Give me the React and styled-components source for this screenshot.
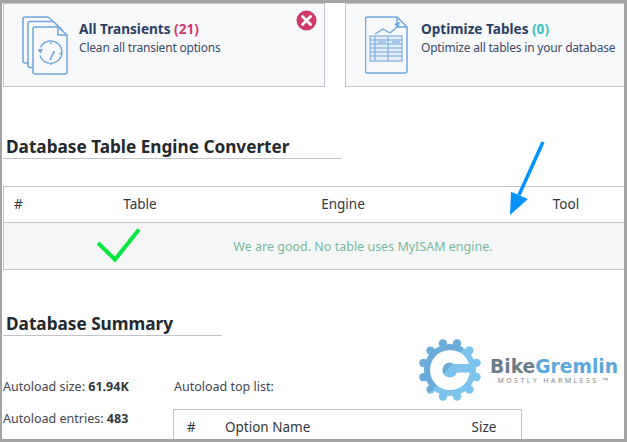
import styled, { createGlobalStyle } from 'styled-components';

const GlobalStyle = createGlobalStyle`
  html, body {
    margin: 0;
    padding: 0;
    background: #fff;
  }
`;

const FONT = `'Noto Sans', 'Open Sans', sans-serif`;

function PagesIcon() {
  const page = (x, y, w, h) =>
    `M${x + 2} ${y}H${x + w - 9}L${x + w} ${y + 8}V${y + h - 2}a2 2 0 0 1-2 2H${x + 2}a2 2 0 0 1-2-2V${y + 2}a2 2 0 0 1 2-2Z`;

  return (
    <IconSvg width="46" height="59" viewBox="0 0 46 59">
      <g fill="#f8f9fb" stroke="#6fa6dc" strokeWidth="1.5" strokeLinejoin="round">
        <path d={page(1, 1, 34, 46)} />
        <path d={page(6, 5.5, 34, 46)} />
        <path d={page(11, 11, 34, 47)} />
        <path d="M36 11v8h9" fill="none" />
      </g>
      <g fill="none" stroke="#6fa6dc" strokeWidth="1.4">
        <path d="M18.5 31.5a11.2 11.2 0 1 1 -0.5 8" />
        <path d="M28 44l2.5-5.5 2-3.5" strokeWidth="1.6" />
        <path d="M29 26v2M29 47v2M39.5 37.5h-2" />
      </g>
      <path d="M15.5 33.5l5.5-.5-2.5 4.5Z" fill="#6fa6dc" />
    </IconSvg>
  );
}

function TablesIcon() {
  const rows = [24, 28, 32, 36, 40];

  return (
    <IconSvg width="43" height="58" viewBox="0 0 43 58">
      <path
        d="M2.5 1H32L42 11V55a2 2 0 0 1-2 2H2.5a2 2 0 0 1-2-2V3a2 2 0 0 1 2-2Z"
        fill="#f8f9fb"
        stroke="#6fa6dc"
        strokeWidth="1.5"
        strokeLinejoin="round"
      />
      <path d="M32 1v10h10" fill="none" stroke="#6fa6dc" strokeWidth="1.5" />
      <path d="M10 18l8-5 7 4 7-6" fill="none" stroke="#6fa6dc" strokeWidth="1.4" />
      <path d="M29 8l6-2-1.5 6Z" fill="#6fa6dc" />
      <g stroke="#7fb0e0" strokeWidth="1.2" fill="#e6eef8">
        <rect x="5" y="20" width="32" height="25" />
        {rows.map((y) => (
          <path key={y} d={`M5 ${y}H37`} />
        ))}
        <path d="M10 20V45M23 20V45" />
      </g>
      <path d="M13 26h8M27 26h8" stroke="#a5c5e8" strokeWidth="2" />
    </IconSvg>
  );
}

function CloseBadge() {
  return (
    <CloseSvg width="21" height="21" viewBox="0 0 21 21">
      <circle cx="10.5" cy="10.5" r="10" fill="#cf3a6b" />
      <path
        d="M6.5 6.5l8 8M14.5 6.5l-8 8"
        stroke="#fff"
        strokeWidth="2.8"
        strokeLinecap="round"
      />
    </CloseSvg>
  );
}

function GearMark() {
  const teeth = Array.from({ length: 12 }, (_, i) => {
    const angle = (i * Math.PI * 2) / 12 + 0.26;
    return [32 + 27.5 * Math.cos(angle), 32 + 27.5 * Math.sin(angle)];
  });

  return (
    <svg width="64" height="64" viewBox="0 0 64 64">
      <defs>
        <linearGradient
          id="gearFill"
          gradientUnits="userSpaceOnUse"
          x1="11"
          y1="19"
          x2="47"
          y2="46"
        >
          <stop offset="0.5" stopColor="#6aabd9" />
          <stop offset="0.5" stopColor="#7cc4ee" />
        </linearGradient>
      </defs>
      <g fill="url(#gearFill)">
        <circle cx="32" cy="32" r="26" />
        {teeth.map(([cx, cy]) => (
          <circle key={`${cx}-${cy}`} cx={cx} cy={cy} r="4.2" />
        ))}
      </g>
      <circle cx="32" cy="32" r="20" fill="#fff" />
      <path
        d="M32 24.5a7.5 7.5 0 0 1 4.5 1.5H52.5V34.5H39a7.5 7.5 0 1 1-7-10Z"
        fill="url(#gearFill)"
      />
    </svg>
  );
}

export default function App() {
  return (
    <>
      <GlobalStyle />
      <Frame>
        <CardRow>
          <Card $width="322px" $pad="18px" $gap="11px">
            <PagesIcon />
            <CardText>
              <CardTitle>
                All Transients <Count $color="#d1386c">(21)</Count>
              </CardTitle>
              <CardDesc>Clean all transient options</CardDesc>
            </CardText>
            <CloseBadge />
          </Card>
          <Card $width="290px" $pad="19px" $gap="13px">
            <TablesIcon />
            <CardText>
              <CardTitle>
                Optimize Tables <Count $color="#3cc3bf">(0)</Count>
              </CardTitle>
              <CardDesc>Optimize all tables in your database</CardDesc>
            </CardText>
          </Card>
        </CardRow>

        <SectionTitle $width="339px" $top="48px">
          Database Table Engine Converter
        </SectionTitle>

        <EngineTable>
          <EngineHead>
            <HashCell>#</HashCell>
            <HeadCell>Table</HeadCell>
            <HeadCell>Engine</HeadCell>
            <HeadCell>Tool</HeadCell>
          </EngineHead>
          <EngineMessage>We are good. No table uses MyISAM engine.</EngineMessage>
        </EngineTable>

        <SectionTitle $width="219px" $top="42px">
          Database Summary
        </SectionTitle>

        <Summary>
          <Stats>
            <Stat>
              Autoload size: <b>61.94K</b>
            </Stat>
            <Stat>
              Autoload entries: <b>483</b>
            </Stat>
          </Stats>
          <TopList>
            <TopLabel>Autoload top list:</TopLabel>
            <TopTable>
              <TopHash>#</TopHash>
              <span>Option Name</span>
              <TopSize>Size</TopSize>
            </TopTable>
          </TopList>
        </Summary>

        <CheckMark width="46" height="36" viewBox="0 0 46 36">
          <path d="M1 15L18 31.5L42 1.5" fill="none" stroke="#00e83f" strokeWidth="4" />
        </CheckMark>

        <Arrow width="40" height="76" viewBox="0 0 40 76">
          <path d="M36 1L12 54" stroke="#0092ff" strokeWidth="3.5" fill="none" />
          <path d="M4 50.7L21 58L3 74Z" fill="#0092ff" />
        </Arrow>

        <Logo>
          <GearMark />
          <LogoText>
            <LogoName>
              Bike<LogoAccent>Gremlin</LogoAccent>
            </LogoName>
            <LogoTag>MOSTLY HARMLESS ™</LogoTag>
          </LogoText>
        </Logo>
      </Frame>
    </>
  );
}

const Frame = styled.div`
  position: relative;

  box-sizing: border-box;
  width: 627px;
  height: 442px;
  padding-left: 1px;

  border-style: solid;
  border-color: #a3a3a3;
  border-width: 3px 3px 3px 2px;

  overflow: hidden;

  font-family: ${FONT};
  font-size: 13px;
  color: #32373c;
`;

const CardRow = styled.div`
  display: flex;
  gap: 20px;
`;

const Card = styled.div`
  position: relative;

  box-sizing: border-box;
  flex: none;
  width: ${(props) => props.$width};
  height: 84px;
  padding-left: ${(props) => props.$pad};

  background-color: #f8f9fb;
  border: 1px solid #c3c4c7;

  display: flex;
  align-items: center;
  gap: ${(props) => props.$gap};
`;

const IconSvg = styled.svg`
  flex: none;
`;

const CloseSvg = styled.svg`
  position: absolute;
  top: 6px;
  right: 7px;
`;

const CardText = styled.div`
  display: flex;
  flex-direction: column;
  gap: 1px;
  margin-top: -14px;
`;

const CardTitle = styled.div`
  font-size: 13.6px;
  line-height: 18px;
  font-weight: 700;
  color: #2a3f63;
`;

const Count = styled.span`
  color: ${(props) => props.$color};
`;

const CardDesc = styled.div`
  font-size: 12px;
  letter-spacing: -0.2px;
  line-height: 17px;
  color: #3b4b68;
  white-space: nowrap;
`;

const SectionTitle = styled.h2`
  box-sizing: border-box;
  width: ${(props) => props.$width};
  height: 24px;
  margin: ${(props) => props.$top} 0 0;
  padding-left: 3px;

  border-bottom: 1px solid #c3c4c7;

  font-size: 17.2px;
  line-height: 23px;
  font-weight: 700;
  color: #23282d;
  white-space: nowrap;
`;

const EngineTable = styled.div`
  box-sizing: border-box;
  height: 84px;
  margin-top: 27px;

  border: 1px solid #c3c4c7;
  border-right: none;
`;

const EngineHead = styled.div`
  display: grid;
  grid-template-columns: 98px 76px 330px 1fr;
  align-items: center;
  height: 33px;
  padding-bottom: 2px;

  border-bottom: 1px solid #c3c4c7;
  font-size: 13.5px;
`;

const HeadCell = styled.span`
  text-align: center;
`;

const HashCell = styled.span`
  padding-left: 10px;
`;

const EngineMessage = styled.div`
  box-sizing: border-box;
  height: 46px;
  padding-left: 98px;

  background-color: #f5f7f6;

  display: flex;
  align-items: center;
  justify-content: center;

  font-size: 12.5px;
  color: #79b9a1;
`;

const Summary = styled.div`
  display: flex;
  margin-top: 42px;
`;

const Stats = styled.div`
  flex: none;
  width: 170px;

  display: flex;
  flex-direction: column;
  gap: 14px;
`;

const Stat = styled.div`
  font-size: 12.5px;
  line-height: 18px;
  color: #3f4650;

  b {
    color: #32373c;
  }
`;

const TopList = styled.div`
  flex: none;
  width: 349px;
`;

const TopLabel = styled.div`
  padding-left: 1px;
  font-size: 12.5px;
  line-height: 18px;
  color: #3f4650;
`;

const TopTable = styled.div`
  box-sizing: border-box;
  height: 40px;
  margin-top: 13px;
  padding-top: 8px;

  border: 1px solid #c3c4c7;

  display: grid;
  grid-template-columns: 51px 1fr 74px;
  align-items: start;
  font-size: 13.5px;
  line-height: 19px;
`;

const TopHash = styled.span`
  padding-left: 13px;
`;

const TopSize = styled.span`
  text-align: center;
`;

const CheckMark = styled.svg`
  position: absolute;
  left: 95px;
  top: 225px;
`;

const Arrow = styled.svg`
  position: absolute;
  left: 505px;
  top: 138px;
`;

const Logo = styled.div`
  position: absolute;
  left: 416px;
  top: 335px;

  display: flex;
  align-items: center;
  gap: 8px;
`;

const LogoText = styled.div`
  display: flex;
  flex-direction: column;
  align-items: center;
`;

const LogoName = styled.div`
  font-family: 'DejaVu Sans', sans-serif;
  font-size: 18.7px;
  line-height: 21px;
  font-weight: 700;
  color: #6c7d8a;
`;

const LogoAccent = styled.span`
  color: #5aa8dc;
`;

const LogoTag = styled.div`
  margin-top: -1px;
  font-size: 7px;
  line-height: 9px;
  letter-spacing: 2.45px;
  color: #7d8890;
  white-space: nowrap;
`;
